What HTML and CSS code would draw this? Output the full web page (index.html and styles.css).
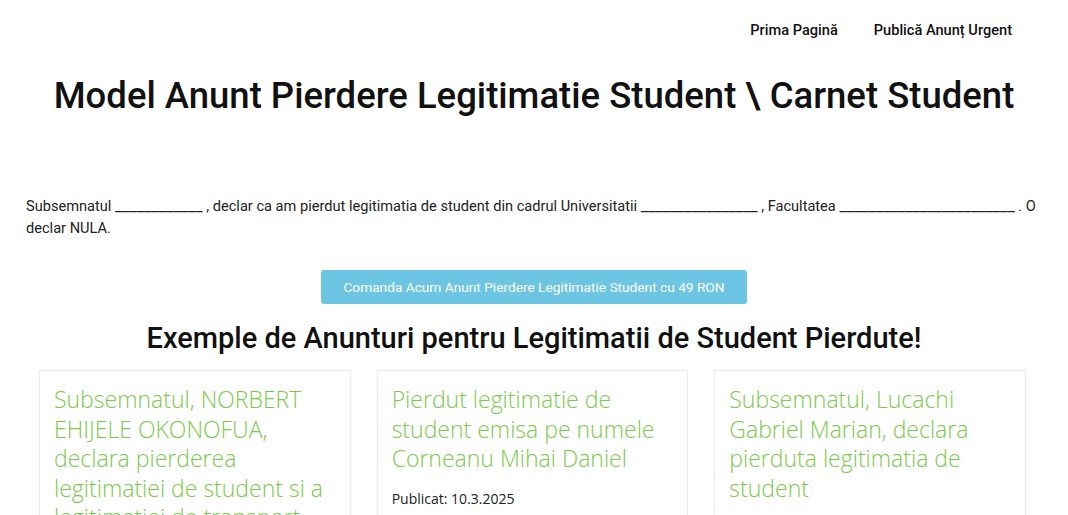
FILE: index.html
```html
<!DOCTYPE html>
<html lang="ro">
<head>
    <meta charset="UTF-8">
    <meta name="viewport" content="width=device-width, initial-scale=1.0">
    <title>Model Anunt Pierdere Legitimatie Student</title>
    <link rel="stylesheet" href="styles.css">
</head>
<body>

    <header class="top-nav">
        <a href="#" class="nav-link">Prima Pagină</a>
        <a href="#" class="nav-link">Publică Anunț Urgent</a>
    </header>

    <main class="page">
        <h1 class="page-title">Model Anunt Pierdere Legitimatie Student \ Carnet Student</h1>

        <p class="model-text">
            Subsemnatul <span class="blank">____________</span> , declar ca am pierdut legitimatia de student din cadrul Universitatii <span class="blank">________________</span> , Facultatea <span class="blank">________________________</span> . O declar NULA.
        </p>

        <div class="order-row">
            <a href="#" class="order-btn">Comanda Acum Anunt Pierdere Legitimatie Student cu 49 RON</a>
        </div>

        <h2 class="section-title">Exemple de Anunturi pentru Legitimatii de Student Pierdute!</h2>

        <!-- Exemple -->
        <div class="cards">
            <div class="card">
                <a href="#" class="card-title">Subsemnatul, NORBERT EHIJELE OKONOFUA, declara pierderea legitimatiei de student si a legitimatiei de transport</a>
                <p class="card-date">Publicat: 8.3.2025</p>
            </div>
            <div class="card">
                <a href="#" class="card-title">Pierdut legitimatie de student emisa pe numele Corneanu Mihai Daniel</a>
                <p class="card-date">Publicat: 10.3.2025</p>
            </div>
            <div class="card">
                <a href="#" class="card-title">Subsemnatul, Lucachi Gabriel Marian, declara pierduta legitimatia de student</a>
                <p class="card-date">Publicat: 12.3.2025</p>
            </div>
        </div>
    </main>

</body>
</html>
```

FILE: styles.css
```css
* {
    margin: 0;
    padding: 0;
    box-sizing: border-box;
}

body {
    font-family: Roboto, "Liberation Sans", sans-serif;
    background: #fff;
    color: #111;
}

a {
    text-decoration: none;
}

.top-nav {
    display: flex;
    justify-content: flex-end;
    gap: 36px;
    padding: 21px 56px 0 0;
}

.nav-link {
    color: #111;
    font-size: 14.6px;
    font-weight: 500;
    line-height: 18px;
}

.page {
    padding: 0 26px;
}

.page-title {
    text-align: center;
    font-size: 36.5px;
    font-weight: 500;
    line-height: 44px;
    margin-top: 35px;
}

.model-text {
    font-size: 14.6px;
    line-height: 22px;
    margin-top: 77px;
    color: #222;
}

.blank {
    font-size: 16.2px;
}

.order-row {
    display: flex;
    justify-content: center;
    margin-top: 31px;
}

.order-btn {
    display: inline-block;
    background: #6dc5e4;
    color: #fff;
    font-size: 13.7px;
    padding: 8px 22px;
    line-height: 18px;
    border-radius: 3px;
}

.section-title {
    text-align: center;
    font-size: 29px;
    font-weight: 500;
    line-height: 34px;
    margin-top: 17px;
}

.cards {
    display: grid;
    grid-template-columns: repeat(3, 1fr);
    gap: 26px;
    padding: 0 16px 0 13px;
    margin-top: 15px;
}

.card {
    border: 1px solid #ececec;
    box-shadow: 0 0 2px rgba(0, 0, 0, 0.04);
    padding: 14px 14px 20px;
}

.card-title {
    display: block;
    font-family: "Open Sans", sans-serif;
    font-weight: 300;
    font-size: 23px;
    line-height: 29.5px;
    color: #7bc94c;
}

.card-date {
    font-family: "Open Sans", sans-serif;
    font-size: 14px;
    color: #222;
    margin-top: 15px;
}
```
